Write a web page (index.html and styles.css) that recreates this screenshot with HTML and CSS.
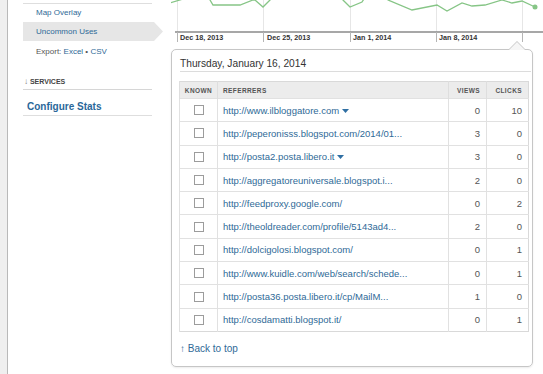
FILE: index.html
```html
<!DOCTYPE html>
<html lang="en">
<head>
    <meta charset="UTF-8">
    <meta name="viewport" content="width=device-width, initial-scale=1.0">
    <title>Stats - Uncommon Uses</title>
    <link rel="stylesheet" href="styles.css">
</head>
<body>
    <div class="page">
        <div class="gutter"></div>

        <div class="sidebar">
            <div class="nav-top"></div>
            <a class="nav-item" href="#">Map Overlay</a>
            <a class="nav-item active" href="#">Uncommon Uses</a>
            <div class="nav-item export">Export: <a href="#">Excel</a> &bull; <a href="#">CSV</a></div>

            <div class="section-head"><span class="arrow">&darr;</span> SERVICES</div>
            <a class="configure" href="#">Configure Stats</a>
        </div>

        <div class="main">
            <svg class="chart" width="372" height="49" viewBox="0 0 372 49">
                <!-- grid lines above the axis -->
                <g stroke="#e6e6e6" stroke-width="1">
                    <line x1="6.5" y1="0" x2="6.5" y2="32" />
                    <line x1="92.5" y1="0" x2="92.5" y2="32" />
                    <line x1="179.5" y1="0" x2="179.5" y2="32" />
                    <line x1="265.5" y1="0" x2="265.5" y2="32" />
                    <line x1="351.5" y1="0" x2="351.5" y2="32" />
                </g>
                <polyline fill="none" stroke="#86c586" stroke-width="1.3"
                    points="-1,3 12,-1 20,-12 34,-12 39,0 42,5 69,5 82,0 84,0 92,7 99,0 110,-12 165,-12 172,0 179,7 191,2 200,-12 210,-12 217,0 241,10 266,5 276,11 291,3 301,6 314,5 331,0 341,3 351,1 364,7" />
                <circle cx="364" cy="7" r="2.5" fill="#86c586" />
                <line x1="4" y1="32" x2="372" y2="32" stroke="#8a8a8a" stroke-width="1.5" />
                <!-- ticks -->
                <g stroke="#b5b5b5" stroke-width="1">
                    <line x1="6.5" y1="32" x2="6.5" y2="42" />
                    <line x1="92.5" y1="32" x2="92.5" y2="42" />
                    <line x1="179.5" y1="32" x2="179.5" y2="42" />
                    <line x1="265.5" y1="32" x2="265.5" y2="42" />
                    <line x1="351.5" y1="32" x2="351.5" y2="42" />
                </g>
                <g class="axis-label">
                    <text x="9" y="40">Dec 18, 2013</text>
                    <text x="96" y="40">Dec 25, 2013</text>
                    <text x="182" y="40">Jan 1, 2014</text>
                    <text x="268" y="40">Jan 8, 2014</text>
                </g>
            </svg>

            <div class="popup">
                <h2 class="popup-title">Thursday, January 16, 2014</h2>

                <table class="referrers">
                    <colgroup>
                        <col class="col-known">
                        <col class="col-ref">
                        <col class="col-views">
                        <col class="col-clicks">
                    </colgroup>
                    <thead>
                        <tr>
                            <th class="known">Known</th>
                            <th class="ref">Referrers</th>
                            <th class="num">Views</th>
                            <th class="num">Clicks</th>
                        </tr>
                    </thead>
                    <tbody>
                        <tr>
                            <td class="known"><input type="checkbox"></td>
                            <td class="ref"><a href="#">http://www.ilbloggatore.com</a><svg class="caret" width="7" height="4" viewBox="0 0 7 4"><path d="M0 0h7L3.5 4z" fill="#2f6fa3"/></svg></td>
                            <td class="num">0</td>
                            <td class="num">10</td>
                        </tr>
                        <tr>
                            <td class="known"><input type="checkbox"></td>
                            <td class="ref"><a href="#">http://peperonisss.blogspot.com/2014/01...</a></td>
                            <td class="num">3</td>
                            <td class="num">0</td>
                        </tr>
                        <tr>
                            <td class="known"><input type="checkbox"></td>
                            <td class="ref"><a href="#">http://posta2.posta.libero.it</a><svg class="caret" width="7" height="4" viewBox="0 0 7 4"><path d="M0 0h7L3.5 4z" fill="#2f6fa3"/></svg></td>
                            <td class="num">3</td>
                            <td class="num">0</td>
                        </tr>
                        <tr>
                            <td class="known"><input type="checkbox"></td>
                            <td class="ref"><a href="#">http://aggregatoreuniversale.blogspot.i...</a></td>
                            <td class="num">2</td>
                            <td class="num">0</td>
                        </tr>
                        <tr>
                            <td class="known"><input type="checkbox"></td>
                            <td class="ref"><a href="#">http://feedproxy.google.com/</a></td>
                            <td class="num">0</td>
                            <td class="num">2</td>
                        </tr>
                        <tr>
                            <td class="known"><input type="checkbox"></td>
                            <td class="ref"><a href="#">http://theoldreader.com/profile/5143ad4...</a></td>
                            <td class="num">2</td>
                            <td class="num">0</td>
                        </tr>
                        <tr>
                            <td class="known"><input type="checkbox"></td>
                            <td class="ref"><a href="#">http://dolcigolosi.blogspot.com/</a></td>
                            <td class="num">0</td>
                            <td class="num">1</td>
                        </tr>
                        <tr>
                            <td class="known"><input type="checkbox"></td>
                            <td class="ref"><a href="#">http://www.kuidle.com/web/search/schede...</a></td>
                            <td class="num">0</td>
                            <td class="num">1</td>
                        </tr>
                        <tr>
                            <td class="known"><input type="checkbox"></td>
                            <td class="ref"><a href="#">http://posta36.posta.libero.it/cp/MailM...</a></td>
                            <td class="num">1</td>
                            <td class="num">0</td>
                        </tr>
                        <tr>
                            <td class="known"><input type="checkbox"></td>
                            <td class="ref"><a href="#">http://cosdamatti.blogspot.it/</a></td>
                            <td class="num">0</td>
                            <td class="num">1</td>
                        </tr>
                    </tbody>
                </table>

                <a class="back-top" href="#">&uarr; Back to top</a>
            </div>
        </div>
    </div>
</body>
</html>
```

FILE: styles.css
```css
body {
    margin: 0;
    font-family: "Liberation Sans", Arial, sans-serif;
    background-color: #fff;
    overflow: hidden;
}

a {
    color: #2f6a97;
    text-decoration: none;
}

.page {
    display: flex;
    height: 374px;
}

.gutter {
    width: 7px;
    background-color: #efefef;
    border-right: 1px solid #b9b9b9;
}

/* left menu */
.sidebar {
    width: 163px;
    padding-left: 15px;
    box-sizing: border-box;
    display: flex;
    flex-direction: column;
}

.nav-top {
    width: 129px;
    height: 3px;
    border-bottom: 1px solid #dedede;
}

.nav-item {
    display: block;
    height: 18px;
    line-height: 18px;
    padding-left: 13px;
    font-size: 8px;
}

.nav-item.active {
    width: 140px;
    height: 19px;
    line-height: 19px;
    box-sizing: border-box;
    background-color: #e6e6e6;
    clip-path: polygon(0 0, 131px 0, 100% 50%, 131px 100%, 0 100%);
}

.nav-item.export {
    height: 20px;
    line-height: 20px;
    margin-top: 1px;
    color: #555;
}

.section-head {
    width: 129px;
    margin-top: 13px;
    line-height: 14px;
    padding-left: 1px;
    box-sizing: border-box;
    border-bottom: 1px solid #d6d6d6;
    font-size: 7px;
    font-weight: bold;
    color: #444;
}

    .section-head .arrow {
        color: #777;
        font-weight: normal;
        font-size: 8px;
    }

.configure {
    width: 129px;
    padding: 9px 0 0 4px;
    line-height: 16px;
    box-sizing: border-box;
    border-bottom: 1px solid #dedede;
    font-size: 10px;
    font-weight: bold;
    color: #2a6799;
}

/* chart + popup */
.main {
    flex: 1;
}

.chart {
    display: block;
}

.axis-label text {
    font-family: "Liberation Sans", Arial, sans-serif;
    font-size: 7.2px;
    font-weight: bold;
    fill: #333;
}

.popup {
    position: relative;
    width: 362px;
    height: 318px;
    box-sizing: border-box;
    border: 1px solid #c6c6c6;
    border-radius: 5px;
    box-shadow: 0 1px 2px rgba(0, 0, 0, 0.08);
    padding: 0 1px 0 8px;
}

    .popup::before,
    .popup::after {
        content: "";
        position: absolute;
        border-style: solid;
        border-color: transparent;
    }

    .popup::before {
        top: -9px;
        left: 336px;
        border-width: 0 9px 9px 9px;
        border-bottom-color: #c6c6c6;
    }

    .popup::after {
        top: -8px;
        left: 337px;
        border-width: 0 8px 8px 8px;
        border-bottom-color: #f6f6f6;
    }

.popup-title {
    margin: 0;
    padding-top: 7px;
    line-height: 14px;
    font-size: 10.2px;
    font-weight: normal;
    color: #333;
    border-bottom: 1px solid #dcdcdc;
}

.referrers {
    margin: 9px 0 0 -1px;
    width: 350px;
    table-layout: fixed;
    border-collapse: collapse;
    border: 1px solid #d9d9d9;
}

.col-known { width: 38px; }
.col-views { width: 38px; }
.col-clicks { width: 42px; }

.referrers th {
    height: 16px;
    padding: 0;
    background-color: #ececec;
    font-size: 6.5px;
    font-weight: bold;
    letter-spacing: 0.4px;
    text-transform: uppercase;
    color: #555;
    border-left: 1px solid #dedede;
}

.referrers td {
    height: 22.3px;
    padding: 0;
    border-top: 1px solid #e1e1e1;
    border-left: 1px solid #e1e1e1;
    font-size: 9.5px;
    color: #555;
    white-space: nowrap;
}

.referrers .known {
    text-align: center;
}

.referrers .ref {
    text-align: left;
    padding-left: 5px;
}

.referrers .num {
    text-align: right;
    padding-right: 6px;
}

.referrers input {
    appearance: none;
    display: block;
    width: 10px;
    height: 10px;
    margin: 0 auto;
    border: 1px solid #9c9c9c;
    background-color: #fff;
}

.caret {
    margin-left: 3px;
    vertical-align: 1px;
}

.back-top {
    display: inline-block;
    margin-top: 11px;
    font-size: 10px;
    line-height: 12px;
}
```
